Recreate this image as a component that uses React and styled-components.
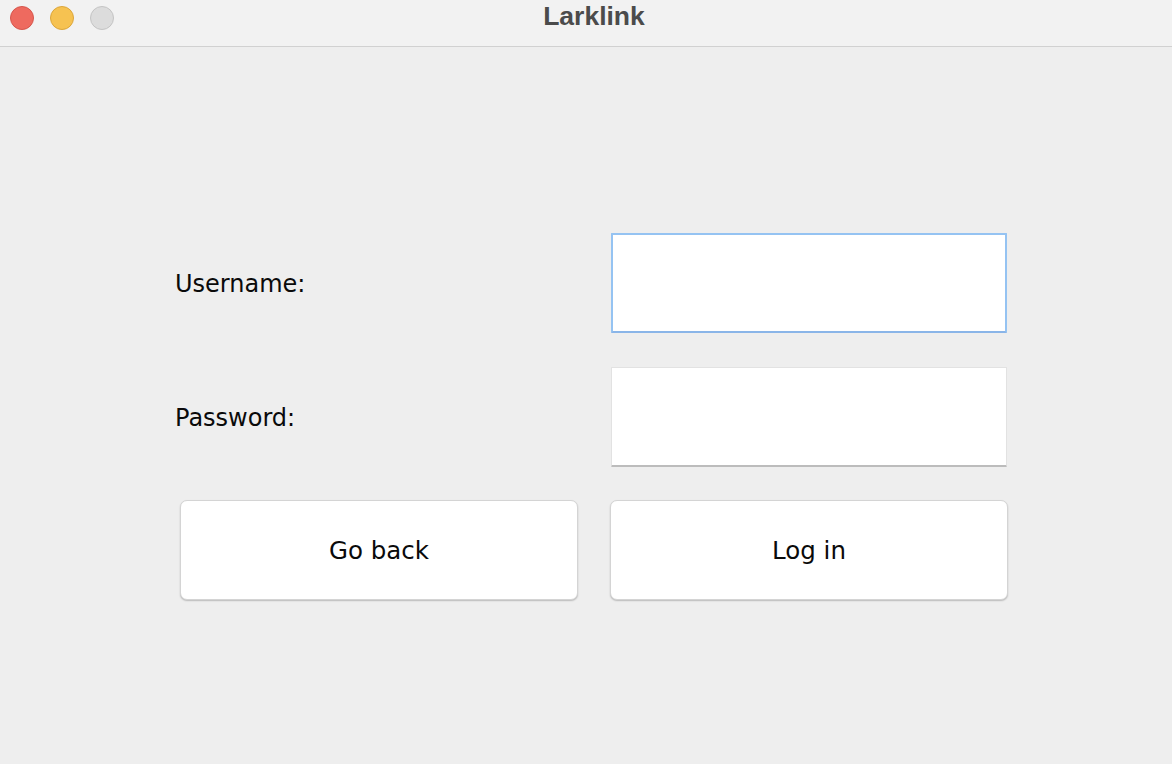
import React from "react";
import styled, { createGlobalStyle } from "styled-components";

const Global = createGlobalStyle`
  html, body { margin: 0; padding: 0; background: #eeeeee; }
  body { font-family: "DejaVu Sans", "Liberation Sans", sans-serif; }
  * { box-sizing: border-box; }
`;

const Window = styled.div`
  width: 1172px;
  height: 764px;
  display: flex;
  flex-direction: column;
  background: #eeeeee;
  overflow: hidden;
`;

const TitleBar = styled.div`
  position: relative;
  height: 47px;
  flex: none;
  display: flex;
  align-items: center;
  justify-content: center;
  background: #f2f2f2;
  border-bottom: 1px solid #d1d1d1;
`;

const Lights = styled.div`
  position: absolute;
  left: 10px;
  top: 6px;
  display: flex;
  gap: 16px;
`;

const Light = styled.span`
  width: 24px;
  height: 24px;
  border-radius: 50%;
  background: ${(p) => p.$fill};
  border: 1px solid ${(p) => p.$stroke};
`;

const Title = styled.div`
  font-family: "Liberation Sans", Arial, sans-serif;
  font-weight: bold;
  font-size: 26.5px;
  color: #4b4b4b;
  margin-top: -14px;
  line-height: 1;
  padding-left: 16px;
`;

const Content = styled.div`
  flex: 1;
  padding: 186px 0 0 175px;
  display: flex;
  flex-direction: column;
`;

const Row = styled.div`
  display: flex;
  align-items: center;
  height: 100px;
  margin-bottom: ${(p) => p.$gap}px;
`;

const Label = styled.div`
  width: 436px;
  font-size: 24px;
  color: #0a0a0a;
  padding-top: 2px;
`;

const Field = styled.input`
  width: 396px;
  height: 100px;
  background: #fff;
  outline: none;
  font-size: 22px;
  padding: 0 10px;
  border: ${(p) =>
    p.$focused ? "2px solid #95c3f2" : "1px solid #e2e2e2"};
  border-bottom: ${(p) =>
    p.$focused ? "2px solid #8ab5e8" : "2px solid #bcbcbc"};
  border-radius: 1px;
`;

const Buttons = styled.div`
  display: flex;
  gap: 32px;
  padding-left: 5px;
`;

const Button = styled.button`
  width: 398px;
  height: 100px;
  background: #fff;
  border: 1px solid #d4d4d4;
  border-radius: 7px;
  box-shadow: 0 1px 1.5px rgba(0, 0, 0, 0.22);
  font-family: "DejaVu Sans", sans-serif;
  font-size: 24.5px;
  color: #0a0a0a;
  cursor: pointer;
  padding: 0;
`;

export default function App() {
  return (
    <>
      <Global />
      <Window>
        <TitleBar>
          <Lights>
            <Light $fill="#ee6a5f" $stroke="#d6564c" />
            <Light $fill="#f6c251" $stroke="#dca63b" />
            <Light $fill="#dcdcdc" $stroke="#c4c4c4" />
          </Lights>
          <Title>Larklink</Title>
        </TitleBar>
        <Content>
          <Row $gap={34}>
            <Label>Username:</Label>
            <Field type="text" $focused />
          </Row>
          <Row $gap={33}>
            <Label>Password:</Label>
            <Field type="password" />
          </Row>
          <Buttons>
            <Button>Go back</Button>
            <Button>Log in</Button>
          </Buttons>
        </Content>
      </Window>
    </>
  );
}
